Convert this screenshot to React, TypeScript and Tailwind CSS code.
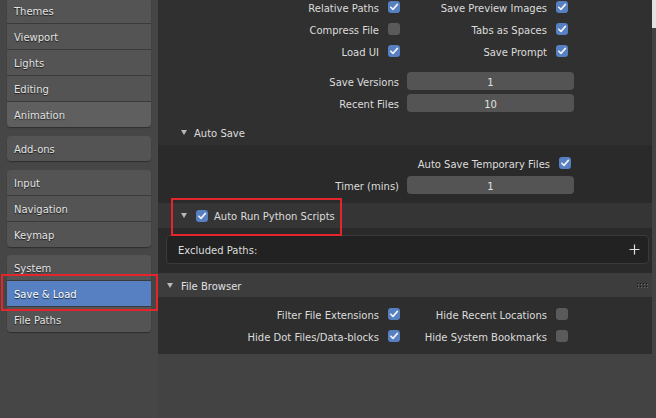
import React from 'react'

const groups = [
  ['Themes', 'Viewport', 'Lights', 'Editing', 'Animation'],
  ['Add-ons'],
  ['Input', 'Navigation', 'Keymap'],
  ['System', 'Save & Load', 'File Paths'],
]

const Check = ({ on }: { on: boolean }) => (
  <div
    className={`w-[12px] h-[12px] rounded-[3px] shrink-0 flex items-center justify-center ${
      on ? 'bg-[#5680c2]' : 'bg-[#5a5a5a]'
    }`}
  >
    {on && (
      <svg width="10" height="10" viewBox="0 0 10 10">
        <path d="M1.8 5.2 L4 7.4 L8.4 2.4" fill="none" stroke="#f2f2f2" strokeWidth="1.6" strokeLinecap="round" strokeLinejoin="round" />
      </svg>
    )}
  </div>
)

const Tri = () => (
  <svg width="6" height="5" viewBox="0 0 6 5" className="shrink-0">
    <path d="M0 0 L6 0 L3 5 Z" fill="#b8b8b8" />
  </svg>
)

// two label+checkbox pairs in a row
const CheckRow = ({ a, aOn, b, bOn }: { a: string; aOn: boolean; b?: string; bOn?: boolean }) => (
  <div className="flex items-center h-[22px]">
    <div className="w-[221px] text-right relative top-[1px]">{a}</div>
    <div className="ml-[9px]">
      <Check on={aOn} />
    </div>
    {b !== undefined ? (
      <>
        <div className="w-[147px] text-right relative top-[1px]">{b}</div>
        <div className="ml-[9px]">
          <Check on={!!bOn} />
        </div>
      </>
    ) : null}
  </div>
)

const SingleCheckRow = ({ label, on }: { label: string; on: boolean }) => (
  <div className="flex items-center h-[22px]">
    <div className="w-[392px] text-right relative top-[1px]">{label}</div>
    <div className="ml-[9px]">
      <Check on={on} />
    </div>
  </div>
)

const FieldRow = ({ label, value }: { label: string; value: string }) => (
  <div className="flex items-center h-[18px]">
    <div className="w-[241px] text-right relative top-[1px]">{label}</div>
    <div className="ml-[8px] w-[167px] h-[18px] rounded-[4px] bg-[#545454] flex items-center justify-center text-[#e2e2e2]">
      <span className="relative top-[1px]">{value}</span>
    </div>
  </div>
)

const Grip = () => (
  <svg width="12" height="5" viewBox="0 0 12 5">
    {[0, 3, 6, 9].map((x) =>
      [0, 3].map((y) => (
        <g key={`${x}-${y}`}>
          <rect x={x + 1} y={y + 1} width="1" height="1" fill="#6a6a6a" />
          <rect x={x} y={y} width="1" height="1" fill="#161616" />
        </g>
      ))
    )}
  </svg>
)

export default function App() {
  return (
    <div className="relative flex w-[656px] h-[418px] overflow-hidden font-['DejaVu_Sans',sans-serif] text-[10px] text-[#dcdcdc]">
      <aside className="w-[158px] shrink-0 bg-[#464646] px-[7px] flex flex-col">
        {groups.map((g, gi) => (
          <div
            key={gi}
            className={`rounded-[4px] overflow-hidden shadow-[0_1px_1px_rgba(0,0,0,0.35)] ${
              gi === 0 ? '-mt-[2px]' : gi === 3 ? 'mt-[8px]' : 'mt-[9px]'
            }`}
          >
            {g.map((t, i) => (
              <div
                key={t}
                className={`flex items-center pl-[7px] text-[#e4e4e4] [text-shadow:0_1px_1px_rgba(0,0,0,0.7)] ${
                  i === 0 ? 'h-[25px]' : 'h-[26px] border-t border-[#3a3a3a]'
                } ${
                  t === 'Save & Load' ? 'bg-[#5680c2] text-white' : t === 'Animation' ? 'bg-[#5f5f5f]' : 'bg-[#545454]'
                }`}
              >
                <span className="relative top-[1px]">{t}</span>
              </div>
            ))}
          </div>
        ))}
      </aside>

      <main className="flex-1 flex bg-[#434343]">
        <div className="w-[494px] flex flex-col">
          {/* Blend files (scrolled) */}
          <div className="bg-[#303030] pb-[8px]">
            <div className="-mt-[4px]">
              <CheckRow a="Relative Paths" aOn b="Save Preview Images" bOn />
              <CheckRow a="Compress File" aOn={false} b="Tabs as Spaces" bOn />
              <CheckRow a="Load UI" aOn b="Save Prompt" bOn />
            </div>
            <div className="mt-[10px] flex flex-col gap-[4px]">
              <FieldRow label="Save Versions" value="1" />
              <FieldRow label="Recent Files" value="10" />
            </div>
          </div>

          {/* Auto Save */}
          <div className="h-[25px] bg-[#303030] flex items-center pl-[23px]">
            <Tri />
            <span className="ml-[7px] relative top-[1px]">Auto Save</span>
          </div>
          <div className="bg-[#2a2a2a] pt-[7px] pb-[9px]">
            <SingleCheckRow label="Auto Save Temporary Files" on />
            <div className="mt-[2px]">
              <FieldRow label="Timer (mins)" value="1" />
            </div>
          </div>

          {/* Auto Run */}
          <div className="h-[25px] bg-[#353535] flex items-center pl-[23px]">
            <Tri />
            <div className="ml-[9px]">
              <Check on />
            </div>
            <span className="ml-[6px] relative top-[1px]">Auto Run Python Scripts</span>
          </div>
          <div className="bg-[#2a2a2a] pt-[7px] pb-[9px] pl-[8px] pr-[3px]">
            <div className="h-[29px] rounded-[4px] bg-[#222222] border border-[#3a3a3a] flex items-center justify-between pl-[11px] pr-[8px]">
              <span className="relative top-[1px]">Excluded Paths:</span>
              <svg width="11" height="11" viewBox="0 0 11 11">
                <path d="M5.5 0.5 V10.5 M0.5 5.5 H10.5" stroke="#e0e0e0" strokeWidth="1.2" />
              </svg>
            </div>
          </div>

          {/* File Browser */}
          <div className="h-[24px] bg-[#3d3d3d] flex items-center pl-[9px] pr-[3px]">
            <Tri />
            <span className="ml-[8px] text-[#e0e0e0] relative top-[1px]">File Browser</span>
            <div className="ml-auto">
              <Grip />
            </div>
          </div>
          <div className="bg-[#2e2e2e] pt-[6px] pb-[7px]">
            <CheckRow a="Filter File Extensions" aOn b="Hide Recent Locations" bOn={false} />
            <CheckRow a="Hide Dot Files/Data-blocks" aOn b="Hide System Bookmarks" bOn={false} />
          </div>
        </div>
        <div className="w-[4px] flex flex-col">
          <div className="h-[28px] bg-[#e2e2e2]" />
        </div>
      </main>

      {/* annotation boxes */}
      <div className="absolute left-[1px] top-[274px] w-[157px] h-[37px] border-2 border-[#e4252b]" />
      <div className="absolute left-[171px] top-[198px] w-[171px] h-[38px] border-2 border-[#e4252b]" />
    </div>
  )
}
